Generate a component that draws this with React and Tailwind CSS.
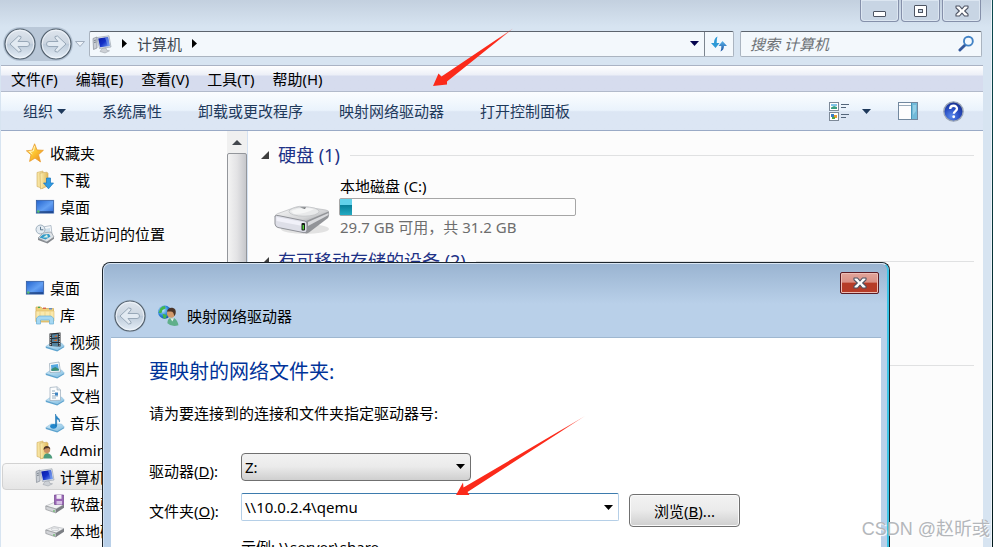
import { useState } from "react";

const MENUS = ["文件(F)", "编辑(E)", "查看(V)", "工具(T)", "帮助(H)"];
const ACTIONS = ["系统属性", "卸载或更改程序", "映射网络驱动器", "打开控制面板"];

/* ---------- icons ---------- */

function Gradients() {
  return (
    <svg width="0" height="0" className="absolute" aria-hidden="true">
      <defs>
        <linearGradient id="gold" x1="0" y1="0" x2="1" y2="1">
          <stop offset="0" stopColor="#fff2a0" />
          <stop offset="0.5" stopColor="#fcc32f" />
          <stop offset="1" stopColor="#e8801c" />
        </linearGradient>
        <linearGradient id="folder" x1="0" y1="0" x2="1" y2="0">
          <stop offset="0" stopColor="#fdf0b4" />
          <stop offset="1" stopColor="#dfb758" />
        </linearGradient>
        <linearGradient id="screen" x1="0" y1="0" x2="1" y2="1">
          <stop offset="0" stopColor="#2464cf" />
          <stop offset="0.55" stopColor="#63a0f3" />
          <stop offset="1" stopColor="#2a66d4" />
        </linearGradient>
        <linearGradient id="navy" x1="0" y1="0" x2="1" y2="1">
          <stop offset="0" stopColor="#0a1aa0" />
          <stop offset="0.5" stopColor="#1330c8" />
          <stop offset="1" stopColor="#7aa4f5" />
        </linearGradient>
        <linearGradient id="metal" x1="0" y1="0" x2="1" y2="1">
          <stop offset="0" stopColor="#fafafa" />
          <stop offset="0.6" stopColor="#d3d4d6" />
          <stop offset="1" stopColor="#8b8c90" />
        </linearGradient>
        <linearGradient id="tray" x1="0" y1="0" x2="1" y2="1">
          <stop offset="0" stopColor="#d5edfa" />
          <stop offset="1" stopColor="#7dbbe0" />
        </linearGradient>
        <linearGradient id="orb" x1="0" y1="0" x2="0" y2="1">
          <stop offset="0" stopColor="#dfe6ee" />
          <stop offset="0.48" stopColor="#cbd5e0" />
          <stop offset="0.5" stopColor="#bccad9" />
          <stop offset="1" stopColor="#e6eff8" />
        </linearGradient>
        <linearGradient id="blueArrow" x1="0" y1="0" x2="0" y2="1">
          <stop offset="0" stopColor="#5bb4ea" />
          <stop offset="1" stopColor="#1a4fa0" />
        </linearGradient>
        <radialGradient id="help" cx="0.4" cy="0.75" r="0.8">
          <stop offset="0" stopColor="#5b8bec" />
          <stop offset="0.5" stopColor="#2a4fc4" />
          <stop offset="1" stopColor="#142a86" />
        </radialGradient>
        <radialGradient id="globe" cx="0.35" cy="0.35" r="0.8">
          <stop offset="0" stopColor="#c6ecff" />
          <stop offset="0.5" stopColor="#2c86dc" />
          <stop offset="1" stopColor="#0d3b94" />
        </radialGradient>
      </defs>
    </svg>
  );
}

function Icon({ children, className = "size-5" }) {
  return (
    <svg viewBox="0 0 20 20" className={`shrink-0 ${className}`} aria-hidden="true">
      {children}
    </svg>
  );
}

const StarIcon = () => (
  <Icon>
    <path d="M9.6 0.8 12 7l6.4.3-4.9 4.4 2 7.2-5.5-3.8L4.6 18.4 6 11.8 1.4 7.8l5.8-.6z" fill="url(#gold)" stroke="#e89a2c" strokeWidth="0.8" strokeLinejoin="round" />
    <path d="M9.6 3.2 8.3 8l-4 .4 3 2.6" fill="none" stroke="#fff7c4" strokeWidth="1" />
  </Icon>
);

const FolderShape = () => (
  <>
    <path d="M2 2.5 8 1v17.5L2 16.5z" fill="#f7e3a0" stroke="#cfab5c" strokeWidth="0.6" />
    <path d="M5 3l7-.8 1 1V16l-7.500 3z" fill="url(#folder)" stroke="#cda859" strokeWidth="0.6" />
  </>
);

const DownloadIcon = () => (
  <Icon>
    <FolderShape />
    <path d="M11.500 8h4v5h3l-5 5.800-5-5.800h3z" fill="#2f9be3" stroke="#1876bd" strokeWidth="0.7" />
  </Icon>
);

const DesktopIcon = () => (
  <Icon>
    <rect x="0.8" y="2.8" width="18.4" height="14" fill="#b7c9e4" />
    <rect x="1.5" y="3.5" width="17" height="12.5" fill="url(#screen)" stroke="#315a9e" strokeWidth="0.7" />
    <path d="M2 15h16" stroke="#17366f" strokeWidth="1.2" />
    <circle cx="3.3" cy="14.5" r="1.3" fill="#57c06d" />
  </Icon>
);

const RecentIcon = () => (
  <Icon>
    <path d="M5 3.5 16 1.5l1 9L7 13z" fill="#f4f7fa" stroke="#9aa9b8" strokeWidth="0.7" />
    <path d="m10 5 5-1v3.5l-5 1z" fill="#cfdfea" />
    <path d="m3 14 5-5 8-1 3 5-7 5z" fill="#dfe3e7" stroke="#8e979f" strokeWidth="0.7" />
    <path d="m4.5 13.5 3.5-3 6-.6 1.500 2.6-5 3z" fill="#339bc9" />
    <path d="m8 13.5 4-3 1 3z" fill="#d9f0e4" />
    <path d="m11.5 18 7.5-5v1.800L12.5 19.5 3 16v-2z" fill="#85898e" />
    <circle cx="5.5" cy="5.5" r="4.5" fill="#e3ebf2" stroke="#9fb0be" strokeWidth="1" />
    <path d="M5.5 2.8v3h2.800" fill="none" stroke="#4c6980" strokeWidth="0.9" />
  </Icon>
);

const LibraryIcon = () => (
  <Icon>
    <path d="M1 4V2h5l1 1.5h11.5V17H1z" fill="#f0d27c" stroke="#cfa953" strokeWidth="0.7" />
    <path d="M3 2.3h2" stroke="#42a953" strokeWidth="1.2" />
    <path d="M8 3.2h3" stroke="#d65243" strokeWidth="1.2" />
    <path d="M14 3.8h3" stroke="#4a7fd0" strokeWidth="1.2" />
    <path d="M1 6h18v10H1z" fill="#fae9ac" stroke="#ddbb69" strokeWidth="0.6" />
    <path d="M5 6v8M10 6v8M15 6v8" stroke="#efd68b" strokeWidth="1" />
    <path d="M1.5 19v-6l2.500-2h12l2.500 2v6h-4v-4h-9v4z" fill="#a5d8f3" stroke="#67afd7" strokeWidth="0.7" />
  </Icon>
);

const Tray = () => (
  <>
    <path d="M.8 14.5 6 11h10.5l2.700 3-7 4z" fill="url(#tray)" stroke="#8fbfdd" strokeWidth="0.6" />
    <path d="m.8 14.5 11.4 3.500 7-4v1.300l-7 4.200L.8 16z" fill="#5ea4cf" />
  </>
);

const VideoIcon = () => (
  <Icon>
    <Tray />
    <path d="M4.5 1.5 15.5.5v14L4.5 14z" fill="#24282d" />
    <path d="M7 2.5 13 2v3.500l-6 .5zM7 7l6-.4v3.500H7zM7 11h6v3H7z" fill="#51829f" />
    <path d="m8 9 4-2v2zM9 5l3-2v2z" fill="#d06a32" />
    <path d="M5.7 2.5v11.500M14.3 1.5v12.500" stroke="#e8edf0" strokeWidth="1" strokeDasharray="1.2 1.2" />
  </Icon>
);

const PictureIcon = () => (
  <Icon>
    <Tray />
    <path d="M4.5 4.5 14 3l1.500 10L5 13.5z" fill="#fafcfd" stroke="#91a5b5" strokeWidth="0.7" />
    <path d="m6 6 7-1 .9 6.500-7.400.5z" fill="#54a8e1" />
    <path d="m6.3 10 4-2 3.500 2 .1 1.500-7.400.5z" fill="#3a8c72" />
  </Icon>
);

const DocIcon = () => (
  <Icon>
    <Tray />
    <path d="M5 1.5 12 .8l3.500 3v10.500L5 14.5z" fill="#fcfdfe" stroke="#9aabba" strokeWidth="0.7" />
    <path d="M12 .8V4h3.500" fill="#dbe4ec" stroke="#9aabba" strokeWidth="0.6" />
    <path d="M7 5h3M7 7.5h6M7 10h6M7 12h4" stroke="#8ba6bd" strokeWidth="0.9" />
    <path d="M10 6.5h3v3h-3z" fill="#3e85c3" />
  </Icon>
);

const MusicIcon = () => (
  <Icon>
    <Tray />
    <ellipse cx="8.5" cy="13.3" rx="3.3" ry="2.4" fill="#2286ca" />
    <path d="M10.5 13V1c.5 3.500 5 3.500 4 8-.3-2.500-2.500-2.800-2.800-3.500V13z" fill="#2286ca" stroke="#176ba9" strokeWidth="0.5" />
  </Icon>
);

const UserFolderIcon = () => (
  <Icon>
    <FolderShape />
    <path d="M8.5 18.5c0-4 1.800-5 4-5s4.500 1.500 4.800 5z" fill="#4e9c7c" />
    <circle cx="12" cy="9.8" r="3.2" fill="#c99062" />
    <path d="M8.6 10c-.5-5 6-5.500 6.800-.8l-2-1.200-3 .5z" fill="#4e3526" />
  </Icon>
);

const ComputerIcon = () => (
  <Icon>
    <path d="M1 4.5 5 3v11l-3.500 1.500z" fill="#c9ced5" stroke="#868e98" strokeWidth="0.7" />
    <path d="M2 6.5 4.2 6M2 8.5 4.2 8" stroke="#5d6772" strokeWidth="0.7" />
    <path d="M5 3.5 17 1.8 19 13 7.5 14.5z" fill="#dfe4eb" stroke="#8f98a4" strokeWidth="0.6" />
    <path d="M6.2 4.5 16 3l1.800 9-9.700 1.200z" fill="url(#navy)" />
    <path d="m13 3.5 3-.5 1.800 9-2 .2z" fill="#80a6f0" opacity="0.6" />
    <path d="m10 14.5 4-.5 1 2.500 2.500.3-4.500 2.200-5-1.500z" fill="#cdd1d6" stroke="#959ba2" strokeWidth="0.5" />
  </Icon>
);

const DriveShape = () => (
  <>
    <path d="M.8 12 9 8.5l10 2-8 4.500z" fill="#f1f2f3" stroke="#aaadb1" strokeWidth="0.6" />
    <path d="M.8 12 11 15v4L.8 15.5z" fill="#d2d4d8" stroke="#85888c" strokeWidth="0.6" />
    <path d="m11 15 8-4.500v3.300L11 19z" fill="#7c7f84" />
    <path d="M9 16.3v1.400" stroke="#3caa3d" strokeWidth="1.2" />
  </>
);

const FloppyIcon = () => (
  <Icon>
    <DriveShape />
    <path d="M9.5 1h9v9.500h-9z" fill="#9a67b5" stroke="#70438c" strokeWidth="0.7" />
    <path d="M11.5 1h5v3.800h-5z" fill="#f3eef7" />
    <path d="M11.5 7h5.500v3.500h-5.500z" fill="#d7c0e5" />
  </Icon>
);

const DriveIcon = () => (
  <Icon>
    <g transform="translate(0 -3)">
      <DriveShape />
      <ellipse cx="10" cy="11.3" rx="4" ry="1.3" fill="none" stroke="#bfc2c6" strokeWidth="0.7" />
    </g>
  </Icon>
);

function BigDrive() {
  return (
    <svg viewBox="0 0 58 34" className="h-[34px] w-[58px] shrink-0" aria-hidden="true">
      <ellipse cx="32" cy="27" rx="24" ry="5" fill="#000" opacity="0.1" />
      <path d="M2 14.5Q2 12.5 5 11.5L23 5q3-1 7-.5l23 3.500q4 .8 2 3L35 22z" fill="url(#metal)" stroke="#b0b2b5" strokeWidth="0.6" />
      <path d="M33 19 55.5 9.5q1.500 3-.5 6.500L36 30.5q-3 1.500-4 .5z" fill="#929498" />
      <path d="m35 20 20.500-9v2L35 24z" fill="#d9dadd" />
      <path d="M2 14q1-1 4-.3l26 5.300q2 .5 2 3v6q0 3-3 2.700L5 25.5q-2.500-.5-3-3.500z" fill="#dedfe8" stroke="#8f9197" strokeWidth="1" />
      <path d="m3.5 15 27.500 5.300v4L3.5 19z" fill="#f5f5fc" opacity="0.8" />
      <ellipse cx="31" cy="9.5" rx="15" ry="4.7" fill="#e8e9ea" stroke="#c2c4c7" strokeWidth="0.8" />
      <path d="M18 9q10-5 23-2-8 5-20 5z" fill="#fbfbfb" opacity="0.7" />
      <path d="m27 5.5 6-.2-1 1.700z" fill="#6d7074" />
      <rect x="28.5" y="21" width="3.5" height="7.5" rx="1" fill="#171d18" />
      <path d="M30.3 23v4.500" stroke="#54d43a" strokeWidth="1.5" />
    </svg>
  );
}

function NetworkUserIcon() {
  return (
    <Icon className="size-[22px]">
      <circle cx="7" cy="6.5" r="6" fill="url(#globe)" />
      <path d="M3 3q2-2 4-2l1 2-3 1.500-1 3-2.500-.5zM5 8l4 1-1 3-2 .5z" fill="#43b64c" />
      <path d="M9.5 16.5c0-4 2-5 4.500-5s5 3 5.500 7q-6 2-10-2z" fill="#5faf8a" />
      <path d="m12 12 2 3 1.500-3z" fill="#e4eee9" />
      <circle cx="12.8" cy="7.8" r="3.8" fill="#d29a6c" />
      <path d="M9 6q1-4 5-3.500 4 .8 2.800 6l-1.300 1.800Q15.5 6 12.5 6z" fill="#4b3428" />
    </Icon>
  );
}

function ArrowOrb({ flip }) {
  return (
    <svg viewBox="0 0 34 34" className="size-[34px]" aria-hidden="true">
      <circle cx="17" cy="17" r="16.2" fill="#a7b9cc" opacity="0.6" />
      <circle cx="17" cy="17" r="15" fill="url(#orb)" stroke="#53606d" strokeWidth="1.2" />
      <circle cx="17" cy="17" r="13.8" fill="none" stroke="#f4f8fc" strokeWidth="1" opacity="0.8" />
      <path
        d="M7 17 15.5 9l2.500.5v1.500l-3 3.500H24q2.500 0 2.500 2.500T24 19.5h-9l3 3.500v1.500l-2.500.5z"
        transform={flip ? "matrix(-1 0 0 1 34 0)" : undefined}
        fill="#e2eaf2"
        stroke="#98a8b8"
        strokeWidth="1"
        strokeLinejoin="round"
      />
    </svg>
  );
}

function Caret({ className = "text-black" }) {
  return (
    <svg viewBox="0 0 9 5" className={`h-[5px] w-[9px] shrink-0 ${className}`} aria-hidden="true">
      <path d="M0 0h9L4.5 5z" fill="currentColor" />
    </svg>
  );
}

function RightCaret() {
  return (
    <svg viewBox="0 0 5 9" className="h-[9px] w-[5px] shrink-0" aria-hidden="true">
      <path d="M0 0v9l5-4.500z" fill="#000" />
    </svg>
  );
}

function CloseX() {
  return (
    <svg viewBox="0 0 14 12" className="h-3 w-3.5" aria-hidden="true">
      <path d="M1 1h3.500L7 3.8 9.5 1H13v1.800L9.7 6 13 9.2V11H9.5L7 8.2 4.5 11H1V9.2L4.3 6 1 2.8z" fill="#fdfdfd" stroke="#4c5262" strokeWidth="1.1" strokeLinejoin="round" />
    </svg>
  );
}

/* Red pointer: long thin tail, head at the lower left corner */
function Pointer({ d, tail, className }) {
  return (
    <svg viewBox="0 0 130 80" className={`pointer-events-none absolute h-[80px] w-[130px] ${className}`} aria-hidden="true">
      <defs>
        <linearGradient id={tail} x1="0" y1="1" x2="1" y2="0">
          <stop offset="0.8" stopColor="#fb2a1a" />
          <stop offset="1" stopColor="#fb2a1a" stopOpacity="0.5" />
        </linearGradient>
      </defs>
      <path d={d} fill={`url(#${tail})`} />
    </svg>
  );
}

/* ---------- explorer window ---------- */

function TitleBar() {
  const btn = "flex h-[22px] w-[39px] items-center justify-center rounded-b-sm border border-t-0 border-[#8590aa] bg-[#c8d5e4] shadow-[inset_0_0_0_1px_#dce6f1]";
  return (
    <div className="flex h-[27px] justify-end gap-[2px] bg-linear-to-b from-[#c3d0df] to-[#d7e4f1] pr-[10px]">
      <button className={btn} aria-label="最小化">
        <svg viewBox="0 0 13 6" className="mt-1.5 h-1.5 w-[13px]"><rect x="0.5" y="0.5" width="12" height="5" rx="0.5" fill="#fff" stroke="#4d5462" /></svg>
      </button>
      <button className={btn} aria-label="最大化">
        <svg viewBox="0 0 13 12" className="h-3 w-[13px]">
          <rect x="0.5" y="0.5" width="12" height="11" rx="0.5" fill="#fff" stroke="#4d5462" />
          <rect x="4.5" y="4.5" width="4" height="3" fill="#c8d5e4" stroke="#4d5462" />
        </svg>
      </button>
      <button className={btn} aria-label="关闭"><CloseX /></button>
    </div>
  );
}

function AddressRow() {
  const field = "flex h-[26px] items-center rounded-xs border border-[#aab4c0] border-t-[#5c646e] bg-[#f3f8fc]";
  return (
    <div className="flex h-[38px] items-center bg-[#d7e4f1] pr-[9px] pb-[5px] pl-[3px]">
      <div className="flex gap-[2px] rounded-full bg-[#bac8d8]">
        <button aria-label="后退"><ArrowOrb /></button>
        <button aria-label="前进"><ArrowOrb flip /></button>
      </div>
      <button className="ml-px w-3" aria-label="最近浏览">
        <svg viewBox="0 0 12 8" className="h-2 w-3"><path d="M1.5 1.5h9L6 6.5z" fill="#edf3f9" stroke="#a2afbf" /></svg>
      </button>
      <nav className={`${field} ml-[3px] flex-1 pl-[2px]`}>
        <ComputerIcon />
        <span className="mr-2.5 ml-2.5"><RightCaret /></span>
        <a href="#computer" className="text-[#404952]">计算机</a>
        <span className="ml-2.5"><RightCaret /></span>
        <button className="mr-[5px] ml-auto" aria-label="历史记录"><Caret className="text-[#04044e]" /></button>
        <button className="flex h-full w-[29px] items-center justify-center border-l border-[#7c858f]" aria-label="刷新">
          <svg viewBox="0 0 18 16" className="h-4 w-[18px]">
            <path d="M7.5.5Q4 2 4 7H1l4.500 5L9.5 7H6.7q-.2-4 .8-6.500z" fill="#2e9ad6" />
            <path d="M10.5 15.5Q14 14 14 10h3l-4.500-5-4 5h2.800q.2 3.500-.8 5.500z" fill="url(#blueArrow)" />
          </svg>
        </button>
      </nav>
      <label className={`${field} ml-[6px] w-[242px] pr-[6px] pl-[9px]`}>
        <input aria-label="搜索" placeholder="搜索 计算机" className="min-w-0 flex-1 bg-transparent italic outline-none placeholder:text-[#6d7276]" />
        <svg viewBox="0 0 18 18" className="size-[17px]" aria-hidden="true">
          <path d="m2 16 6-6" stroke="#34599c" strokeWidth="3" strokeLinecap="round" />
          <circle cx="11" cy="6.5" r="4.7" fill="#f4fafe" stroke="#4283c5" strokeWidth="2" />
        </svg>
      </label>
    </div>
  );
}

function MenuBar() {
  return (
    <div className="flex h-[26px] items-center gap-[18px] border-t border-[#aab3c4] bg-linear-to-b from-white from-0% via-[#eceff7] via-36% to-[#d6dcee] to-40% pl-[10px]">
      {MENUS.map((m) => <button key={m}>{m}</button>)}
    </div>
  );
}

function Toolbar() {
  return (
    <div className="flex h-10 items-center border-y border-t-[#b2bacb] border-b-[#9aaac6] bg-linear-to-b from-[#fbfdff] from-0% via-[#eaf3fc] via-48% to-[#dce6f4] to-52% pr-[19px] pl-[22px] text-[#1e395b]">
      <button className="mr-9 flex items-center gap-1">组织 <Caret className="text-[#1e395b]" /></button>
      <div className="flex flex-1 gap-9">
        {ACTIONS.map((a) => <button key={a}>{a}</button>)}
      </div>
      <button className="flex items-center gap-3" aria-label="更改视图">
        <svg viewBox="0 0 21 19" className="h-[19px] w-[21px]" aria-hidden="true">
          <rect x="0.5" y="0.5" width="9" height="8" fill="#fff" stroke="#7d8998" />
          <path d="M2 2h6v2H2z" fill="#81c4e8" /><path d="M2 5.5 5 4l3 1v2H2z" fill="#3b9f83" />
          <rect x="0.5" y="10.5" width="9" height="8" fill="#fff" stroke="#7d8998" />
          <path d="M2 12h3v3H2z" fill="#397bc5" /><path d="M5 13h3v3H5z" fill="#e89c31" /><path d="M3 15h3v2H3z" fill="#4ea54c" />
          <path d="M12 2.5h8M12 5.5h5M12 12.5h8M12 15.5h5" stroke="#53657a" />
        </svg>
        <Caret className="text-[#1e395b]" />
      </button>
      <button className="ml-[27px]" aria-label="预览窗格">
        <svg viewBox="0 0 20 18" className="h-[18px] w-5">
          <rect x="0.5" y="0.5" width="19" height="17" fill="#fdfdfe" stroke="#72889f" />
          <path d="M1 3.5h12" stroke="#9aabbb" />
          <path d="M13 1h6v16h-6z" fill="#71bad9" /><path d="M13.5 1v16" stroke="#4795b9" /><path d="M15 3h3v6l-3 4z" fill="#abdeee" opacity="0.6" />
        </svg>
      </button>
      <button className="ml-[25px] flex size-[21px] items-center justify-center" aria-label="帮助">
        <svg viewBox="0 0 20 20" className="size-[21px]">
          <circle cx="10" cy="10" r="9.2" fill="url(#help)" stroke="#9aa5b6" strokeWidth="1.3" />
          <path d="M6.8 7.6c.2-4.200 6.700-3.900 6.500-.1-.1 2.100-3 2.200-3 4.700" fill="none" stroke="#fff" strokeWidth="2.2" />
          <circle cx="10.2" cy="15" r="1.35" fill="#fff" />
        </svg>
      </button>
    </div>
  );
}

const TREE = [
  { icon: StarIcon, label: "收藏夹", level: 0 },
  { icon: DownloadIcon, label: "下载", level: 1 },
  { icon: DesktopIcon, label: "桌面", level: 1 },
  { icon: RecentIcon, label: "最近访问的位置", level: 1 },
  null,
  { icon: DesktopIcon, label: "桌面", level: 0 },
  { icon: LibraryIcon, label: "库", level: 1 },
  { icon: VideoIcon, label: "视频", level: 2 },
  { icon: PictureIcon, label: "图片", level: 2 },
  { icon: DocIcon, label: "文档", level: 2 },
  { icon: MusicIcon, label: "音乐", level: 2 },
  { icon: UserFolderIcon, label: "Administrator", level: 1 },
  { icon: ComputerIcon, label: "计算机", level: 1, selected: true },
  { icon: FloppyIcon, label: "软盘驱动器", level: 2 },
  { icon: DriveIcon, label: "本地磁盘 (C:)", level: 2 },
];

const INDENT = ["pl-[22px]", "pl-[32px]", "pl-[42px]"];

function Sidebar() {
  return (
    <aside className="flex w-[247px] shrink-0 border-r border-[#d5e2f2]">
      <ul className="flex-1 pt-2 pl-px">
        {TREE.map((n, i) =>
          n ? (
            <li key={i}>
              <a
                href="#tree"
                className={`flex h-[27px] items-center gap-[5px] rounded-sm border whitespace-nowrap ${INDENT[n.level]} ${n.selected ? "border-[#d2d2d2] bg-linear-to-b from-[#f8f8f8] to-[#e5e5e5]" : "border-transparent"}`}
              >
                <n.icon />
                {n.label}
              </a>
            </li>
          ) : (
            <li key={i} className="h-[27px]" />
          )
        )}
      </ul>
      <div className="flex w-5 flex-col bg-[#f0f0f0]">
        <div className="flex h-[22px] items-center justify-center">
          <svg viewBox="0 0 10 5" className="h-[5px] w-2.5"><path d="M0 5h10L5 0z" fill="#43474d" /></svg>
        </div>
        <div className="flex-1 rounded-xs border border-[#93969b] bg-linear-to-r from-[#f3f3f3] via-[#e3e3e5] to-[#c6c7cb]" />
      </div>
    </aside>
  );
}

function GroupHeader({ children }) {
  return (
    <h2 className="flex h-6 items-center text-lg leading-6 text-[#1e3287]">
      <svg viewBox="0 0 8 8" className="mr-[9px] size-2 shrink-0" aria-hidden="true"><path d="M8 0v8H0z" fill="#3f3f3f" /></svg>
      {children}
      <span className="ml-2.5 h-px flex-1 bg-[#e0e1e2]" />
    </h2>
  );
}

function DriveList() {
  return (
    <main className="min-w-0 flex-1 pt-3 pr-[9px] pl-[13px]">
      <GroupHeader>硬盘 (1)</GroupHeader>
      <div className="flex h-[82px] pt-[7px] pl-3">
        <div className="pt-7"><BigDrive /></div>
        <div className="ml-2 w-[237px]">
          <div className="pl-px leading-6">本地磁盘 (C:)</div>
          <div className="h-[18px] rounded-xs border border-[#a6a6a6] bg-[#fdfdfd]">
            <div className="h-full w-[5%] bg-linear-to-b from-[#62d1ea] from-35% via-[#087f99] via-40% to-[#22abc3]" />
          </div>
          <div className="pl-px leading-[22px] whitespace-nowrap text-[#6d6d6d]">29.7 GB 可用，共 31.2 GB</div>
        </div>
      </div>
      <GroupHeader>有可移动存储的设备 (2)</GroupHeader>
      <div className="h-20" />
      <div className="flex h-6 items-center"><span className="h-px flex-1 bg-[#e0e1e2]" /></div>
    </main>
  );
}

/* ---------- wizard dialog ---------- */

function MapDriveDialog() {
  const [drive, setDrive] = useState("Z:");
  const [folder, setFolder] = useState("\\\\10.0.2.4\\qemu");

  return (
    <section
      role="dialog"
      aria-labelledby="wizard-title"
      className="absolute top-[262px] right-[103px] bottom-0 left-[102px] flex flex-col overflow-hidden rounded-t-lg border border-b-0 border-[#1d252c] bg-[#b9d0e9]"
    >
      <div className="flex min-h-0 flex-1 flex-col rounded-t-[7px] border-t border-r-2 border-l border-t-[#d9e6f3] border-r-[#3cc4e6] border-l-[#d3e2f2] bg-linear-to-b from-[#9ab4d1] to-[#b9d0e9] to-[40px] pr-[6px] pl-[7px]">
        <div className="flex h-[30px] shrink-0 justify-end pt-2">
          <button aria-label="关闭" className="mr-[2px] flex h-[22px] w-[39px] items-center justify-center rounded-xs border border-[#5a1b24] bg-linear-to-b from-[#e2a59b] from-0% via-[#da9085] via-46% to-[#b63c28] to-50% shadow-[inset_0_0_0_1px_#edbdb5]">
            <CloseX />
          </button>
        </div>
        <header className="flex h-[43px] shrink-0 items-center pl-[2px]">
          <button aria-label="上一步"><ArrowOrb /></button>
          <span className="ml-2.5"><NetworkUserIcon /></span>
          <h1 id="wizard-title" className="ml-2">映射网络驱动器</h1>
        </header>
        <div className="min-h-0 flex-1 overflow-hidden border-t border-[#9eb7d0] bg-white pt-[22px] pl-[38px]">
          <h2 className="text-xl leading-6 text-[#003399]">要映射的网络文件夹:</h2>
          <p className="mt-[19px] leading-5">请为要连接到的连接和文件夹指定驱动器号:</p>

          <div className="mt-[30px] flex h-7 items-center">
            <label htmlFor="drive" className="w-[92px] pt-2">驱动器(<u>D</u>):</label>
            <div className="relative w-[230px]">
              <select
                id="drive"
                value={drive}
                onChange={(e) => setDrive(e.target.value)}
                className="h-7 w-full appearance-none rounded-sm border border-[#707070] bg-linear-to-b from-[#f2f2f2] from-0% via-[#ebebeb] via-48% to-[#cfcfcf] pl-[3px] outline-none"
              >
                <option>Z:</option>
                <option>Y:</option>
              </select>
              <span className="pointer-events-none absolute top-[11px] right-[6px] flex"><Caret /></span>
            </div>
          </div>

          <div className="mt-3 flex h-[34px] items-start">
            <label htmlFor="folder" className="w-[92px] pt-2">文件夹(<u>O</u>):</label>
            <div className="flex h-7 w-[378px] items-center rounded-xs border border-[#b5cfe7] border-t-[#3d7bad] pr-[5px] pl-[3px]">
              <input id="folder" value={folder} onChange={(e) => setFolder(e.target.value)} className="min-w-0 flex-1 outline-none" />
              <button className="flex" aria-label="展开"><Caret /></button>
            </div>
            <button className="mt-px ml-2.5 h-[33px] w-[111px] rounded-sm border border-[#707070] bg-linear-to-b from-[#f2f2f2] from-0% via-[#ebebeb] via-48% to-[#cfcfcf] shadow-[inset_0_0_0_1px_#fafafa]">
              浏览(<u>B</u>)...
            </button>
          </div>

          <p className="mt-2.5 ml-[92px] leading-5">示例: \\server\share</p>
        </div>
      </div>
    </section>
  );
}

export default function App() {
  return (
    <div className="relative flex h-screen overflow-hidden bg-linear-to-b from-[#0c4a50] to-[#02191c] pr-px font-['Noto_Sans','Noto_Sans_CJK_SC',sans-serif] text-[15px] leading-5 text-black">
      <Gradients />
      <div className="flex min-w-0 flex-1 flex-col border-r border-[#eef4fa] bg-[#d7e4f1]">
        <TitleBar />
        <AddressRow />
        <div className="mr-2 ml-px flex min-h-0 flex-1 flex-col">
          <MenuBar />
          <Toolbar />
          <div className="flex min-h-0 flex-1 overflow-hidden bg-[#fcfcfc]">
            <Sidebar />
            <DriveList />
          </div>
        </div>
      </div>

      <MapDriveDialog />

      <Pointer
        className="top-[20px] left-[420px]"
        tail="tail-a"
        d="M93 8.500 27 61.500 27 64.500 13 66l5.500-12.500 3 3z"
      />
      <Pointer
        className="top-[416px] left-[456px]"
        tail="tail-b"
        d="M129 0 11.500 76l2 3L0 79l7-12.500.5 5z"
      />
      <div className="absolute right-[3px] bottom-[6px] text-lg leading-6 text-[#b4b7bb] [text-shadow:1px_1px_1px_#fff] font-['Liberation_Sans','Noto_Sans_CJK_SC',sans-serif]">
        CSDN @赵昕彧
      </div>
    </div>
  );
}
